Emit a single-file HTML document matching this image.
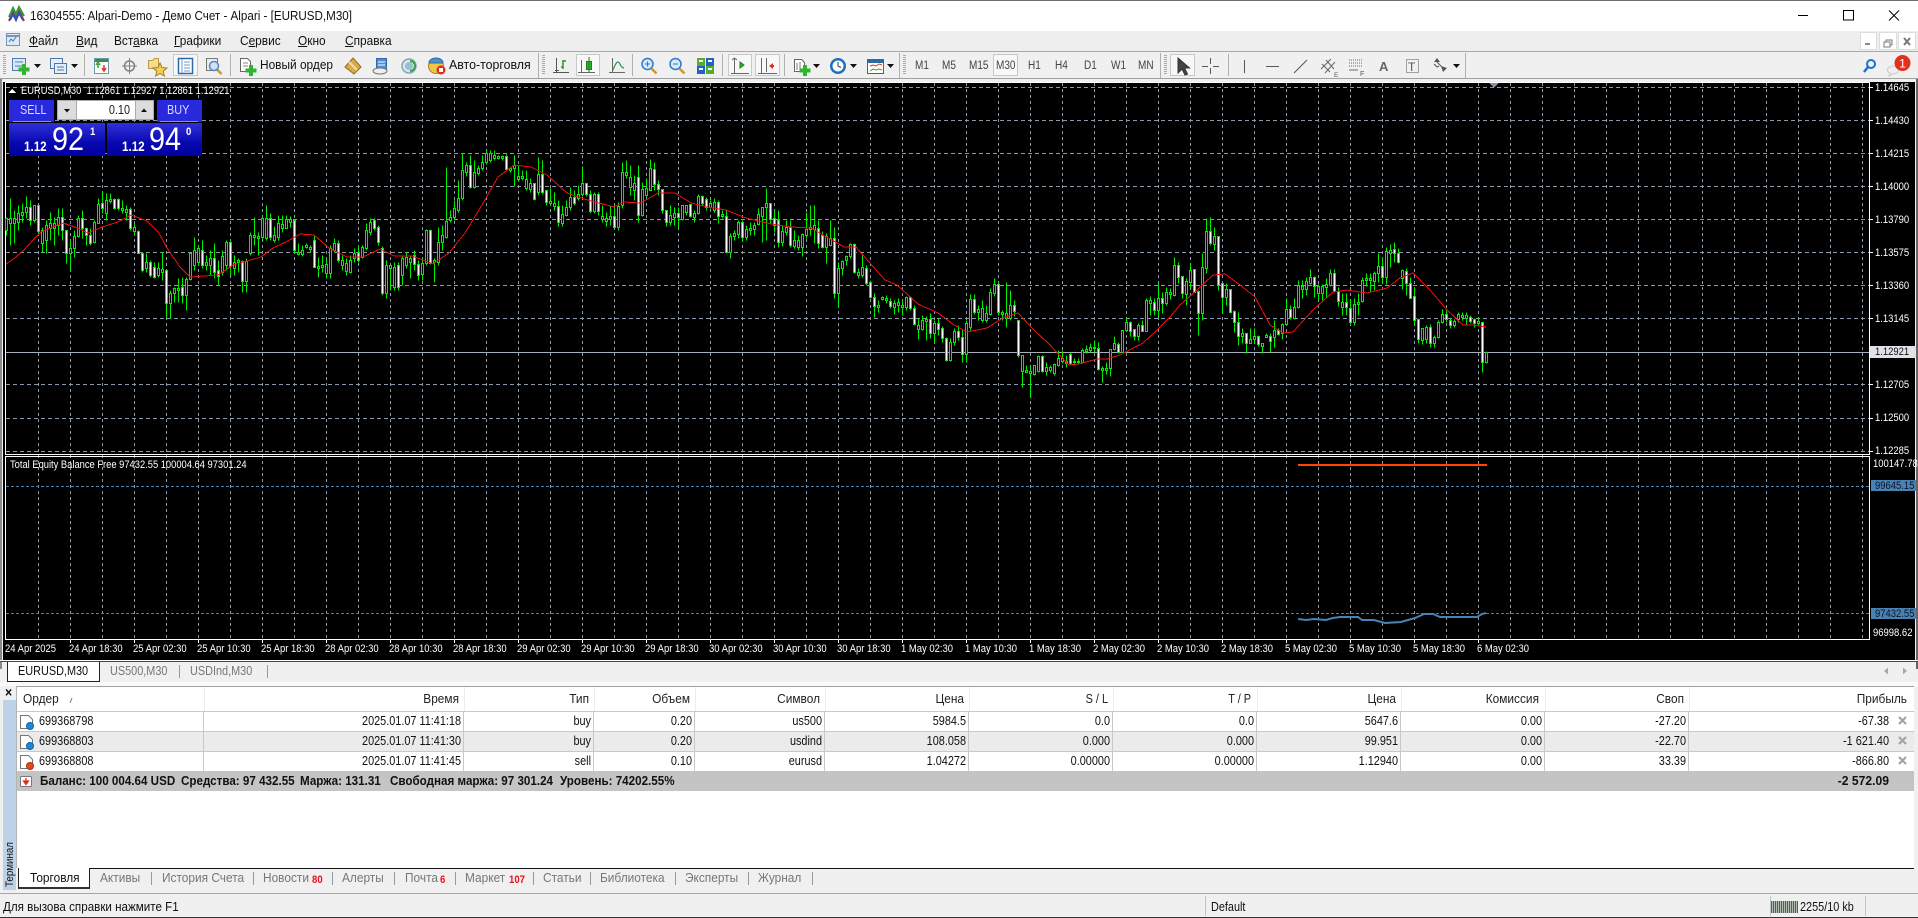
<!DOCTYPE html>
<html lang="ru"><head><meta charset="utf-8"><title>MT4</title>
<style>
html,body{margin:0;padding:0}
body{width:1918px;height:918px;overflow:hidden;position:relative;background:#f0f0f0;font-family:"Liberation Sans","Noto Sans CJK SC",sans-serif;color:#111}
div{box-sizing:border-box}
.a{position:absolute}
.t{position:absolute;white-space:nowrap;font-size:12.5px;line-height:14px;transform:scaleX(.87);transform-origin:0 0}
.r{margin-left:-300px;width:300px;text-align:right;transform-origin:100% 0}
.c,.hd .t{transform:scaleX(.95)}
.d{position:absolute;white-space:nowrap;font-size:11px;line-height:12px;color:#fff;transform:scaleX(.86);transform-origin:0 0}
.p{color:#444;font-size:11.5px;top:59px}
.g{color:#777}
.b{font-weight:bold}
.red{position:absolute;color:#e8141c;font-size:11px;font-weight:bold;line-height:12px;top:874px;transform:scaleX(.87);transform-origin:0 0}
.row{position:absolute;left:0;width:1918px;height:14px}
svg{position:absolute;left:0;top:0}
</style></head><body>
<!-- window frame -->
<div class="a" style="left:0;top:0;width:1918px;height:31px;background:#fff;border-top:1px solid #6e6e6e"></div>
<div class="a" style="left:0;top:31px;width:1918px;height:20px;background:#eee"></div>
<div class="a" style="left:0;top:51px;width:1918px;height:28px;background:#f0f0f0;border-top:1px solid #a8a8a8;border-bottom:1px solid #a0a0a0"></div>
<div class="a" style="left:3px;top:82px;width:1912px;height:579px;background:#000"></div>
<div class="a" style="left:0;top:79px;width:2px;height:590px;background:#8a8a8a"></div>
<div class="a" style="left:1916px;top:79px;width:2px;height:590px;background:#666"></div>

<div class="t" style="left:30px;top:9px;transform:scaleX(.93)">16304555: Alpari-Demo - Демо Счет - Alpari - [EURUSD,M30]</div>
<div class="t c" style="left:29px;top:34px"><u>Ф</u>айл</div>
<div class="t c" style="left:76px;top:34px"><u>В</u>ид</div>
<div class="t c" style="left:114px;top:34px">Вст<u>а</u>вка</div>
<div class="t c" style="left:174px;top:34px"><u>Г</u>рафики</div>
<div class="t c" style="left:240px;top:34px">С<u>е</u>рвис</div>
<div class="t c" style="left:298px;top:34px"><u>О</u>кно</div>
<div class="t c" style="left:345px;top:34px"><u>С</u>правка</div>
<div class="a" style="left:1860px;top:32px;width:17px;height:18px;background:#fff;border:1px solid #ddd"></div>
<div class="a" style="left:1879px;top:32px;width:18px;height:18px;background:#fff;border:1px solid #ddd"></div>
<div class="a" style="left:1898px;top:32px;width:18px;height:18px;background:#fff;border:1px solid #ddd"></div>

<div class="a" style="left:173px;top:54px;width:25px;height:22px;background:#f8f8f8;border:1px solid #c8c8c8"></div>
<div class="a" style="left:576px;top:54px;width:24px;height:22px;background:#f8f8f8;border:1px solid #c8c8c8"></div>
<div class="a" style="left:728px;top:54px;width:24px;height:22px;background:#f8f8f8;border:1px solid #c8c8c8"></div>
<div class="a" style="left:755px;top:54px;width:25px;height:22px;background:#f8f8f8;border:1px solid #c8c8c8"></div>
<div class="a" style="left:993px;top:54px;width:25px;height:22px;background:#f8f8f8;border:1px solid #c8c8c8"></div>
<div class="a" style="left:1170px;top:54px;width:25px;height:22px;background:#f8f8f8;border:1px solid #c8c8c8"></div>

<div class="t" style="left:260px;top:58px;transform:scaleX(.95)">Новый ордер</div>
<div class="t" style="left:449px;top:58px;transform:scaleX(.99)">Авто-торговля</div>
<div class="t p" style="left:915px">M1</div><div class="t p" style="left:942px">M5</div><div class="t p" style="left:969px">M15</div><div class="t p" style="left:996px">M30</div><div class="t p" style="left:1028px">H1</div><div class="t p" style="left:1055px">H4</div><div class="t p" style="left:1084px">D1</div><div class="t p" style="left:1111px">W1</div><div class="t p" style="left:1138px">MN</div>

<!-- chrome icons -->
<svg width="1918" height="82" viewBox="0 0 1918 82" fill="none">
<path d="M9 21L13 11L16 17L19 9L22 17L24 21" stroke="#c8312a" stroke-width="2"/><path d="M9 17L13 8L16 14L19 7L24 16" stroke="#2d9a3c" stroke-width="2"/><path d="M10 20L13 14L16 20L19 13L23 20" stroke="#2a4fc0" stroke-width="2"/>
<rect x="6.500" y="33.500" width="13" height="12" fill="#dfe9f3" stroke="#6f96bf"/><path d="M9 42l2-3 2 2 3-4" stroke="#4a78a8"/><path d="M6 36h14" stroke="#6f96bf" stroke-width="2"/>
<path d="M1798 15.500h10" stroke="#000"/><rect x="1843.500" y="10.500" width="10" height="9.500" stroke="#000"/><path d="M1889 10.500l10 10M1899 10.500l-10 10" stroke="#000"/>
<path d="M1865 44h5" stroke="#888" stroke-width="2"/><rect x="1886" y="40" width="6" height="5" stroke="#777"/><rect x="1884" y="42" width="6" height="5" fill="#fff" stroke="#777"/><path d="M1904 38l6 7M1910 38l-6 7" stroke="#777" stroke-width="2"/>
<!-- separators and grips -->
<path d="M84.500 54v22M230.500 54v22M538.500 53v25M632.500 54v22M722.500 54v22M784.500 54v22M899.500 53v25M1160.500 53v25M1228.500 54v22M1465.500 53v25" stroke="#b0b0b0"/>
<path d="M4.500 55v20M543.500 55v20M904.500 55v20M1165.500 55v20" stroke="#aaa" stroke-width="3" stroke-dasharray="1 1"/>
<path d="M34 64h7l-3.500 4zM71 64h7l-3.500 4zM813 64h7l-3.500 4zM850 64h7l-3.500 4zM887 64h7l-3.500 4zM1453 64h7l-3.500 4z" fill="#111"/>
<!-- new chart -->
<rect x="12.500" y="58.500" width="13" height="12" fill="#dde8f4" stroke="#4b7cb2"/><path d="M15 62h8M15 66h8" stroke="#4b7cb2"/><path d="M24 64v11M18.500 69.500h11" stroke="#2fb52f" stroke-width="4"/>
<!-- profiles -->
<rect x="50.500" y="58.500" width="12" height="10" fill="#e6eef7" stroke="#5078a8"/><rect x="54.500" y="63.500" width="12" height="10" fill="#e6eef7" stroke="#5078a8"/><path d="M57 67h7M57 70h7" stroke="#5078a8"/>
<!-- market watch -->
<rect x="94.500" y="58.500" width="14" height="15" fill="#fff" stroke="#6a9aa8"/><path d="M95 60.500h13" stroke="#3f8a4a" stroke-width="3"/><path d="M98 68v-4M96 65l2-3 2 3" stroke="#2fa52f" stroke-width="1.500"/><path d="M104 65v5M102 68l2 3 2-3" stroke="#d83a20" stroke-width="1.500"/>
<!-- crosshair -->
<circle cx="129.500" cy="66" r="5" stroke="#808080" stroke-width="1.500"/><path d="M129.500 58v16M122 66h15" stroke="#808080"/>
<!-- navigator -->
<path d="M148.500 60.500h4l2-2h4v10h-10z" fill="#f6dc8e" stroke="#b89a40"/><path d="M160 63l2 4.500 5 .5-3.800 3.200 1.200 4.800-4.400-2.600-4.400 2.600 1.200-4.800L153 68l5-.5z" fill="#f5cf52" stroke="#a08028"/>
<!-- terminal -->
<rect x="178.500" y="58.500" width="14" height="15" fill="#fff" stroke="#2a6aa8" stroke-width="1.500"/><path d="M182 59v14M184 62h6M184 65h6M184 68h6M184 71h6" stroke="#6f9ac8"/>
<!-- tester -->
<rect x="206.500" y="58.500" width="11" height="12" fill="#e6ecf2" stroke="#777"/><circle cx="214" cy="66" r="4.500" fill="#cfe3f5" stroke="#5a8ab8" stroke-width="1.500"/><path d="M217.500 70l4 4" stroke="#c89a30" stroke-width="2.500"/>
<!-- new order -->
<path d="M240.500 58.500h7l3 3v10h-10z" fill="#fff" stroke="#666"/><path d="M243 63h5M243 66h5" stroke="#888"/><path d="M251 65v11M245.500 70.500h11" stroke="#2fb52f" stroke-width="4"/>
<!-- metaeditor -->
<path d="M345 67l8-9 8 9-7 7z" fill="#dba94c" stroke="#8a6a20"/><path d="M349 62l8 8" stroke="#f5dca0" stroke-width="2"/>
<!-- mailbox -->
<rect x="376.500" y="58.500" width="10" height="11" fill="#4a90d9" stroke="#2f6aa8"/><path d="M378 62h7M378 65h7" stroke="#fff"/><ellipse cx="380" cy="71" rx="7" ry="3" fill="#eee" stroke="#777"/>
<!-- signals -->
<circle cx="409" cy="66" r="7" fill="#dbe7ee" stroke="#8aa4b4" stroke-width="1.500"/><circle cx="409" cy="66" r="4" fill="#9ac0d0"/><path d="M410 61a5 5 0 0 1 0 10" stroke="#3aa54a" stroke-width="2"/>
<!-- autotrade -->
<circle cx="436" cy="66" r="7.500" fill="#f0c648" stroke="#a88020"/><path d="M429 63a7 5 0 0 1 14 0z" fill="#4d93c8" stroke="#2f6aa8"/><circle cx="441" cy="70" r="4.500" fill="#d8321e"/><rect x="439" y="68" width="4" height="4" fill="#fff"/>
<!-- bars / candle / line -->
<path d="M556.500 58v14M553 72.500h16M555 70.500h4" stroke="#555"/><path d="M563 60v9M563 61h3M561 67h2" stroke="#2a9a2a" stroke-width="1.500"/>
<path d="M581.500 60v13M578 72.500h17" stroke="#666"/><rect x="586.500" y="61.500" width="5" height="8" fill="#2fb52f" stroke="#1a801a"/><path d="M589 57v15" stroke="#1a801a"/>
<path d="M612.500 58v15M609 72.500h16" stroke="#666"/><path d="M613 70c3-8 5-10 7-6 1 3 3 4 4 4" stroke="#2a9a4a" stroke-width="1.200"/>
<!-- zoom -->
<circle cx="647.500" cy="64" r="5.500" fill="#d6e8fa" stroke="#2a7ad0" stroke-width="1.500"/><path d="M645 64h5M647.500 61.500v5" stroke="#2a7ad0"/><path d="M651.500 68.500l5 5" stroke="#c89a30" stroke-width="2.500"/>
<circle cx="675.500" cy="64" r="5.500" fill="#d6e8fa" stroke="#2a7ad0" stroke-width="1.500"/><path d="M673 64h5" stroke="#2a7ad0"/><path d="M679.500 68.500l5 5" stroke="#c89a30" stroke-width="2.500"/>
<rect x="697" y="58" width="8" height="8" fill="#55ad2e"/><rect x="706" y="58" width="8" height="8" fill="#2262c4"/><rect x="697" y="66" width="8" height="8" fill="#2262c4"/><rect x="706" y="66" width="8" height="8" fill="#55ad2e"/><path d="M699 61h4M708 61h4M699 69h4M708 69h4" stroke="#fff" stroke-width="2"/>
<!-- autoscroll / shift -->
<path d="M734.500 58v15M731 73.500h18M732 60l2.500-2 2.500 2" stroke="#666"/><path d="M740 62v6l4-3z" fill="#2fb52f" stroke="#1a801a"/>
<path d="M761.500 58v15M758 73.500h19M766.500 58v14" stroke="#666"/><path d="M769 66l4-3v2h1v2h-1v2z" fill="#d8321e"/>
<!-- indicators -->
<path d="M794.500 59.500h7l3 3v9h-10z" fill="#fff" stroke="#666"/><path d="M797 63v7M800 62v9" stroke="#777"/><path d="M805 65v11M799.500 70.500h11" stroke="#2fb52f" stroke-width="4"/>
<!-- clock -->
<circle cx="838" cy="66" r="8" fill="#1a6fc4"/><circle cx="838" cy="66" r="5.500" fill="#fff"/><path d="M838 62v4l3 1.500" stroke="#335" stroke-width="1"/>
<!-- templates -->
<rect x="867.500" y="59.500" width="16" height="14" fill="#fff" stroke="#2a6aa8"/><path d="M868 61.500h15" stroke="#2a6aa8" stroke-width="3"/><path d="M870 66l3-1 3 1 3-2 3 1" stroke="#d83a20"/><path d="M870 71l3-2 3 1 3-1 3 1" stroke="#2fa52f"/>
<!-- cursor -->
<path d="M1178 58v15l4-4 3 6 2.500-1-3-6h5z" fill="#444" stroke="#333"/>
<path d="M1210.500 58v6M1210.500 68v6M1202 66.500h6M1213 66.500h6" stroke="#555"/>
<path d="M1244.500 60v13M1266 66.500h13M1294 73l13-13" stroke="#555"/>
<path d="M1321 69l10-10M1325 73l10-11M1326 60l8 9M1322 64l8 8" stroke="#666"/>
<path d="M1349 60h14M1349 63h14M1349 66h14" stroke="#666" stroke-dasharray="1 1"/><path d="M1349 70h9" stroke="#666"/>
<rect x="1406.500" y="59.500" width="12" height="13" stroke="#555" stroke-dasharray="1 1"/>
<path d="M1437 58l3 4h-6zM1441 66l6 2-4 4z" fill="#555"/><path d="M1437 62l5 5" stroke="#555"/><path d="M1434 64l3 3 2-1" stroke="#555"/>
<!-- search and chat -->
<circle cx="1871" cy="64" r="4" stroke="#1f6fd0" stroke-width="2"/><path d="M1868 67l-4 5" stroke="#1f6fd0" stroke-width="2.500"/>
<ellipse cx="1893" cy="70" rx="5.500" ry="4" fill="#eee" stroke="#ccc"/><path d="M1890 73l-1 3 4-2" fill="#eee" stroke="#ccc"/>
<circle cx="1902.500" cy="63" r="8" fill="#e3301e"/>
<text x="1902.500" y="67.500" font-family="Liberation Sans" font-size="12" fill="#fff" text-anchor="middle">1</text>
<text x="1321" y="77" font-family="Liberation Sans" font-size="6.500" fill="#555" transform="translate(13,0)">E</text>
<text x="1360" y="76" font-family="Liberation Sans" font-size="7" fill="#555">F</text>
<text x="1379" y="71" font-family="Liberation Sans" font-size="13" font-weight="bold" fill="#666">A</text>
<text x="1408" y="71" font-family="Liberation Sans" font-size="12" fill="#555">T</text>
</svg>

<!-- chart -->
<svg width="1918" height="918" viewBox="0 0 1918 918" fill="none" shape-rendering="crispEdges" style="z-index:1">
<path stroke="#8a9aaa" stroke-dasharray="3 3" d="M38.500 83V639M70.500 83V639M102.500 83V639M134.500 83V639M166.500 83V639M198.500 83V639M230.500 83V639M262.500 83V639M294.500 83V639M326.500 83V639M358.500 83V639M390.500 83V639M422.500 83V639M454.500 83V639M486.500 83V639M518.500 83V639M550.500 83V639M582.500 83V639M614.500 83V639M646.500 83V639M678.500 83V639M710.500 83V639M742.500 83V639M774.500 83V639M806.500 83V639M838.500 83V639M870.500 83V639M902.500 83V639M934.500 83V639M966.500 83V639M998.500 83V639M1030.500 83V639M1062.500 83V639M1094.500 83V639M1126.500 83V639M1158.500 83V639M1190.500 83V639M1222.500 83V639M1254.500 83V639M1286.500 83V639M1318.500 83V639M1350.500 83V639M1382.500 83V639M1414.500 83V639M1446.500 83V639M1478.500 83V639M1510.500 83V639M1542.500 83V639M1574.500 83V639M1606.500 83V639M1638.500 83V639M1670.500 83V639M1702.500 83V639M1734.500 83V639M1766.500 83V639M1798.500 83V639M1830.500 83V639M1862.500 83V639"/>
<path d="M6 87.500H1869M6 120.500H1869M6 153.500H1869M6 186.500H1869M6 219.500H1869M6 252.500H1869M6 285.500H1869M6 318.500H1869M6 384.500H1869M6 418.500H1869M6 451.500H1869" stroke="#8a9aaa" stroke-dasharray="4 3"/>
<path d="M6 352.500H1869" stroke="#a6b0bc"/>
<path d="M6 486.500H1869M6 613.500H1869" stroke="#4682b4" stroke-dasharray="3 2"/>
<path d="M5.500 82.500H1869.500V454M5.500 82V454M5 454.500H1870M5 456.500H1870M5.500 456V639.500H1870M1869.500 456V640" stroke="#fff"/>
<path d="M1870 87.500h3M1870 120.500h3M1870 153.500h3M1870 186.500h3M1870 219.500h3M1870 252.500h3M1870 285.500h3M1870 318.500h3M1870 384.500h3M1870 418.500h3M1870 451.500h3M70.500 640v3M134.500 640v3M198.500 640v3M262.500 640v3M326.500 640v3M390.500 640v3M454.500 640v3M518.500 640v3M582.500 640v3M646.500 640v3M710.500 640v3M774.500 640v3M838.500 640v3M902.500 640v3M966.500 640v3M1030.500 640v3M1094.500 640v3M1158.500 640v3M1222.500 640v3M1286.500 640v3M1350.500 640v3M1414.500 640v3M1478.500 640v3" stroke="#fff"/>
<g transform="translate(.5,.5)">
<path stroke="#0e0" d="M6 217V235M10 198V245M14 210V243M18 205V230M22 203V222M26 196V218M30 200V225M34 205V222M38 205V235M42 227V252M46 220V253M50 212V240M54 217V245M58 208V235M62 208V240M66 230V263M70 240V270M74 230V257M78 215V237M82 210V238M86 227V245M90 228V245M94 220V243M98 198V223M102 191V213M106 193V220M110 193V203M114 198V209M118 198V210M122 200V213M126 205V220M130 207V230M134 223V235M138 230V253M142 252V272M146 253V272M150 260V277M154 262V278M158 262V277M162 252V280M166 270V317M170 290V318M174 287V302M178 278V302M182 277V303M186 277V310M190 252V280M194 237V270M198 245V265M202 240V268M206 255V270M210 250V275M214 243V278M218 260V285M222 250V275M226 240V270M230 240V275M234 255V275M238 258V272M242 260V292M246 258V292M250 232V255M254 217V245M258 232V255M262 218V240M266 205V240M270 213V240M274 226V242M278 215V240M282 215V232M286 215V228M290 216V227M294 220V253M298 243V255M302 245V256M306 243V248M310 245V252M314 235V267M318 257V277M322 255V272M326 258V278M330 245V278M334 238V252M338 240V262M342 255V270M346 258V275M350 255V273M354 248V262M358 245V262M362 245V258M366 223V250M370 218V235M374 218V230M378 225V245M382 246V295M386 260V298M390 265V290M394 262V290M398 262V290M402 255V285M406 252V268M410 255V278M414 250V270M418 260V280M422 258V280M426 229V265M430 229V264M434 258V282M438 227V265M442 225V250M446 167V238M450 210V222M454 200V220M458 180V212M462 153V200M466 162V176M470 155V188M474 160V188M478 165V175M482 155V170M486 150V164M490 150V162M494 150V160M498 155V159M502 155V160M506 154V170M510 167V172M514 155V186M518 165V181M522 170V180M526 170V190M530 178V192M534 183V200M538 157V195M542 160V194M546 190V205M550 188V205M554 192V210M558 200V226M562 205V226M566 200V216M570 187V210M574 190V205M578 185V200M582 166V196M586 183V196M590 190V213M594 192V213M598 192V215M602 205V222M606 212V226M610 205V225M614 205V228M618 202V230M622 162V208M626 160V178M630 165V195M634 175V200M638 165V222M642 182V216M646 178V197M650 159V190M654 162V190M658 180V195M662 189V213M666 210V226M670 205V225M674 207V225M678 207V228M682 205V220M686 205V215M690 204V217M694 210V222M698 194V214M702 195V205M706 197V210M710 200V208M714 198V212M718 200V223M722 210V218M726 210V253M730 233V258M734 230V240M738 220V238M742 220V241M746 225V240M750 222V235M754 222V235M758 208V225M762 207V242M766 188V240M770 203V223M774 210V232M778 210V247M782 225V246M786 220V235M790 220V247M794 230V248M798 235V250M802 233V256M806 212V238M810 205V235M814 205V243M818 220V248M822 231V248M826 233V263M830 220V246M834 227V298M838 262V307M842 260V275M846 255V265M850 243V258M854 243V273M858 268V278M862 253V277M866 265V285M870 280V298M874 293V317M878 300V312M882 296V300M886 295V303M890 298V308M894 300V314M898 298V312M902 300V315M906 296V310M910 296V310M914 305V325M918 318V339M922 315V330M926 316V340M930 313V338M934 320V343M938 318V335M942 326V342M946 337V361M950 338V361M954 328V345M958 325V340M962 330V362M966 320V362M970 294V330M974 294V314M978 305V320M982 300V322M986 305V322M990 288V315M994 278V296M998 282V315M1002 310V320M1006 282V327M1010 290V320M1014 300V316M1018 320V357M1022 355V387M1026 365V372M1030 365V397M1034 365V375M1038 355V372M1042 355V372M1046 362V375M1050 365V372M1054 363V375M1058 350V366M1062 350V363M1066 355V367M1070 352V364M1074 358V364M1078 358V364M1082 348V362M1086 345V353M1090 343V352M1094 340V352M1098 342V370M1102 366V382M1106 362V374M1110 349V376M1114 336V350M1118 342V353M1122 330V352M1126 317V331M1130 321V336M1134 329V340M1138 323V340M1142 320V331M1146 298V331M1150 296V315M1154 298V315M1158 283V317M1162 292V313M1166 287V305M1170 288V299M1174 257V296M1178 262V283M1182 276V298M1186 278V305M1190 263V288M1194 269V292M1198 290V335M1202 253V320M1206 218V273M1210 217V245M1214 227V250M1218 236V290M1222 283V313M1226 283V305M1230 289V313M1234 310V332M1238 312V345M1242 328V343M1246 333V353M1250 328V343M1254 328V343M1258 335V346M1262 343V353M1266 333V337M1270 333V352M1274 320V347M1278 328V335M1282 323V339M1286 298V324M1290 305V319M1294 298V319M1298 280V308M1302 280V298M1306 277V295M1310 269V284M1314 276V297M1318 284V300M1322 284V300M1326 278V298M1330 269V286M1334 269V292M1338 287V306M1342 293V315M1346 293V315M1350 299V323M1354 298V325M1358 293V315M1362 277V302M1366 273V286M1370 273V291M1374 271V290M1378 253V282M1382 257V283M1386 247V284M1390 244V267M1394 242V262M1398 248V263M1402 269V289M1406 268V295M1410 277V298M1414 287V325M1418 318V343M1422 328V344M1426 325V343M1430 324V347M1434 335V347M1438 320V338M1442 309V323M1446 310V322M1450 318V328M1454 319V327M1458 312V322M1462 312V320M1466 312V325M1470 315V323M1474 318V327M1478 317V326M1482 322V372M1486 351V363"/>
<path stroke="#0e0" fill="#000" d="M5 218h2v12h-2zM9 218h2v5h-2zM13 218h2v5h-2zM17 213h2v9h-2zM21 212h2v3h-2zM25 207h2v5h-2zM33 205h2v15h-2zM41 230h2v13h-2zM45 225h2v15h-2zM49 223h2v5h-2zM53 223h2v5h-2zM57 217h2v8h-2zM69 248h2v5h-2zM73 236h2v12h-2zM77 218h2v18h-2zM93 222h2v20h-2zM97 204h2v19h-2zM105 200h2v13h-2zM109 199h2v2h-2zM121 208h2v2h-2zM125 209h2v3h-2zM133 227h2v4h-2zM145 262h2v6h-2zM157 268h2v7h-2zM161 269h2v3h-2zM169 293h2v10h-2zM173 288h2v5h-2zM177 288h2v2h-2zM185 279h2v16h-2zM189 253h2v26h-2zM193 250h2v15h-2zM197 248h2v14h-2zM205 262h2v3h-2zM209 258h2v7h-2zM221 256h2v16h-2zM225 242h2v23h-2zM233 262h2v6h-2zM237 260h2v2h-2zM245 261h2v20h-2zM249 235h2v18h-2zM253 235h2v2h-2zM257 236h2v2h-2zM261 218h2v19h-2zM265 218h2v20h-2zM273 235h2v5h-2zM277 223h2v14h-2zM281 224h2v4h-2zM285 219h2v9h-2zM289 219h2v3h-2zM297 252h2v2h-2zM301 250h2v4h-2zM305 245h2v2h-2zM309 247h2v2h-2zM317 266h2v2h-2zM321 265h2v2h-2zM325 264h2v9h-2zM329 248h2v25h-2zM333 243h2v7h-2zM341 260h2v5h-2zM345 263h2v8h-2zM349 260h2v12h-2zM353 253h2v5h-2zM361 247h2v10h-2zM365 230h2v18h-2zM369 222h2v10h-2zM385 265h2v28h-2zM389 265h2v3h-2zM393 267h2v20h-2zM401 258h2v17h-2zM405 257h2v8h-2zM409 258h2v4h-2zM421 263h2v11h-2zM425 230h2v33h-2zM433 260h2v2h-2zM437 242h2v20h-2zM441 235h2v7h-2zM445 221h2v16h-2zM449 217h2v3h-2zM453 208h2v9h-2zM457 198h2v12h-2zM461 170h2v28h-2zM465 165h2v7h-2zM473 172h2v15h-2zM477 168h2v5h-2zM481 162h2v6h-2zM485 153h2v9h-2zM489 153h2v7h-2zM493 155h2v3h-2zM497 156h2v2h-2zM501 156h2v2h-2zM509 168h2v2h-2zM513 165h2v3h-2zM517 176h2v3h-2zM521 176h2v2h-2zM525 179h2v9h-2zM529 183h2v6h-2zM537 174h2v18h-2zM549 201h2v2h-2zM553 203h2v3h-2zM561 214h2v9h-2zM565 207h2v8h-2zM569 197h2v10h-2zM577 194h2v4h-2zM581 183h2v11h-2zM593 194h2v17h-2zM601 216h2v3h-2zM605 218h2v3h-2zM609 216h2v3h-2zM617 206h2v21h-2zM621 172h2v33h-2zM625 172h2v3h-2zM629 177h2v10h-2zM633 183h2v7h-2zM641 189h2v26h-2zM645 188h2v7h-2zM649 168h2v22h-2zM669 215h2v7h-2zM673 213h2v4h-2zM681 205h2v14h-2zM685 205h2v7h-2zM693 213h2v4h-2zM697 196h2v17h-2zM709 203h2v4h-2zM713 202h2v8h-2zM721 214h2v2h-2zM729 236h2v16h-2zM733 233h2v3h-2zM737 222h2v12h-2zM745 229h2v8h-2zM749 228h2v2h-2zM753 225h2v4h-2zM757 214h2v10h-2zM761 207h2v9h-2zM765 203h2v4h-2zM781 231h2v11h-2zM785 227h2v5h-2zM793 240h2v6h-2zM797 240h2v7h-2zM801 234h2v13h-2zM805 229h2v6h-2zM809 227h2v2h-2zM813 225h2v4h-2zM825 236h2v11h-2zM829 238h2v7h-2zM837 268h2v25h-2zM841 261h2v7h-2zM845 256h2v4h-2zM849 244h2v12h-2zM857 272h2v3h-2zM861 267h2v8h-2zM877 305h2v2h-2zM881 297h2v2h-2zM885 298h2v2h-2zM893 303h2v4h-2zM897 302h2v3h-2zM901 305h2v2h-2zM905 297h2v10h-2zM917 325h2v4h-2zM921 320h2v9h-2zM925 319h2v2h-2zM933 323h2v10h-2zM949 342h2v18h-2zM953 331h2v11h-2zM965 323h2v31h-2zM969 299h2v28h-2zM977 309h2v3h-2zM981 308h2v12h-2zM985 313h2v7h-2zM989 292h2v22h-2zM993 284h2v9h-2zM1001 312h2v2h-2zM1005 313h2v5h-2zM1009 305h2v13h-2zM1021 355h2v16h-2zM1025 370h2v2h-2zM1029 371h2v2h-2zM1033 365h2v9h-2zM1037 356h2v15h-2zM1045 367h2v4h-2zM1049 367h2v3h-2zM1053 364h2v9h-2zM1057 358h2v7h-2zM1061 358h2v3h-2zM1065 361h2v2h-2zM1073 361h2v1h-2zM1077 361h2v1h-2zM1081 350h2v12h-2zM1085 349h2v2h-2zM1089 347h2v3h-2zM1101 368h2v2h-2zM1105 368h2v2h-2zM1109 349h2v19h-2zM1113 343h2v6h-2zM1121 330h2v22h-2zM1125 322h2v8h-2zM1137 325h2v11h-2zM1145 300h2v31h-2zM1149 300h2v3h-2zM1157 298h2v12h-2zM1165 292h2v11h-2zM1169 292h2v2h-2zM1173 265h2v30h-2zM1185 281h2v13h-2zM1189 270h2v12h-2zM1201 267h2v46h-2zM1205 231h2v37h-2zM1213 236h2v8h-2zM1225 289h2v8h-2zM1241 333h2v3h-2zM1249 339h2v4h-2zM1253 336h2v3h-2zM1261 343h2v3h-2zM1265 335h2v2h-2zM1273 330h2v7h-2zM1281 324h2v9h-2zM1285 309h2v15h-2zM1293 307h2v11h-2zM1297 285h2v22h-2zM1301 286h2v3h-2zM1305 281h2v8h-2zM1309 277h2v6h-2zM1317 286h2v7h-2zM1321 286h2v7h-2zM1325 284h2v3h-2zM1329 273h2v12h-2zM1341 302h2v5h-2zM1353 304h2v18h-2zM1357 302h2v2h-2zM1361 280h2v21h-2zM1365 278h2v2h-2zM1369 278h2v2h-2zM1373 273h2v8h-2zM1377 266h2v7h-2zM1385 251h2v26h-2zM1389 250h2v3h-2zM1401 270h2v8h-2zM1421 328h2v12h-2zM1425 327h2v12h-2zM1433 337h2v6h-2zM1437 322h2v15h-2zM1441 314h2v8h-2zM1453 321h2v4h-2zM1457 314h2v5h-2zM1461 315h2v2h-2zM1465 315h2v3h-2zM1477 321h2v2h-2zM1485 352h2v10h-2z"/>
<path stroke="#0e0" fill="#fff" d="M29 207h2v13h-2zM37 205h2v26h-2zM61 217h2v13h-2zM65 230h2v23h-2zM81 218h2v10h-2zM85 228h2v7h-2zM89 235h2v8h-2zM101 203h2v5h-2zM113 199h2v9h-2zM117 199h2v9h-2zM129 209h2v19h-2zM137 231h2v22h-2zM141 253h2v17h-2zM149 262h2v13h-2zM153 267h2v10h-2zM165 270h2v33h-2zM181 287h2v8h-2zM201 250h2v15h-2zM213 258h2v14h-2zM217 270h2v6h-2zM229 242h2v24h-2zM241 261h2v20h-2zM269 218h2v19h-2zM293 220h2v30h-2zM313 240h2v27h-2zM337 243h2v17h-2zM357 252h2v8h-2zM373 220h2v8h-2zM377 227h2v15h-2zM381 248h2v45h-2zM397 265h2v22h-2zM413 255h2v9h-2zM417 264h2v11h-2zM429 230h2v33h-2zM469 165h2v22h-2zM505 156h2v13h-2zM533 183h2v16h-2zM541 174h2v18h-2zM545 190h2v12h-2zM557 206h2v16h-2zM573 197h2v6h-2zM585 183h2v11h-2zM589 194h2v17h-2zM597 194h2v17h-2zM613 216h2v11h-2zM637 177h2v38h-2zM653 169h2v15h-2zM657 184h2v5h-2zM661 189h2v21h-2zM665 210h2v12h-2zM677 213h2v4h-2zM689 204h2v12h-2zM701 196h2v7h-2zM705 199h2v8h-2zM717 202h2v14h-2zM725 216h2v36h-2zM741 222h2v15h-2zM769 203h2v16h-2zM773 218h2v7h-2zM777 220h2v22h-2zM789 227h2v18h-2zM817 228h2v15h-2zM821 235h2v12h-2zM833 238h2v55h-2zM853 244h2v28h-2zM865 268h2v15h-2zM869 282h2v15h-2zM873 297h2v9h-2zM889 301h2v5h-2zM909 297h2v11h-2zM913 308h2v16h-2zM929 319h2v14h-2zM937 323h2v6h-2zM941 328h2v10h-2zM945 338h2v22h-2zM957 331h2v6h-2zM961 337h2v17h-2zM973 299h2v13h-2zM997 284h2v28h-2zM1013 305h2v6h-2zM1017 320h2v35h-2zM1041 356h2v15h-2zM1069 354h2v9h-2zM1093 347h2v1h-2zM1097 348h2v21h-2zM1117 344h2v8h-2zM1129 322h2v9h-2zM1133 329h2v7h-2zM1141 325h2v6h-2zM1153 302h2v8h-2zM1161 298h2v5h-2zM1177 265h2v12h-2zM1181 276h2v17h-2zM1193 269h2v23h-2zM1197 291h2v22h-2zM1209 231h2v12h-2zM1217 236h2v49h-2zM1221 283h2v14h-2zM1229 289h2v23h-2zM1233 311h2v11h-2zM1237 322h2v14h-2zM1245 333h2v10h-2zM1257 336h2v8h-2zM1269 336h2v5h-2zM1277 330h2v4h-2zM1289 309h2v8h-2zM1313 277h2v9h-2zM1333 273h2v18h-2zM1337 291h2v10h-2zM1345 302h2v5h-2zM1349 308h2v14h-2zM1381 266h2v11h-2zM1393 249h2v4h-2zM1397 253h2v9h-2zM1405 271h2v12h-2zM1409 283h2v15h-2zM1413 296h2v24h-2zM1417 319h2v20h-2zM1429 327h2v16h-2zM1445 314h2v5h-2zM1449 320h2v5h-2zM1469 317h2v4h-2zM1473 319h2v4h-2zM1481 322h2v40h-2z"/>
</g>
<polyline stroke="#f01010" points="6,264 16,257 24,250 33,240 41,232 53,227 63,223 75,227 88,233 102,227 118,222 131,215 147,221 159,233 167,248 180,267 190,277 218,275 233,265 261,257 273,248 286,242 300,234 314,235 329,248 347,257 363,257 380,249 394,256 412,256 433,264 449,253 465,233 482,205 498,177 514,165 531,167 547,175 567,193 584,199 614,207 624,202 640,203 648,199 658,193 675,193 691,203 707,207 726,210 746,218 771,224 791,227 811,228 832,240 844,247 856,247 869,262 885,280 897,285 918,304 938,313 954,325 967,332 987,328 1003,318 1018,313 1034,330 1048,343 1069,365 1079,364 1097,359 1107,359 1120,355 1143,343 1157,330 1170,317 1180,305 1197,290 1213,275 1225,274 1240,285 1255,297 1270,325 1283,333 1293,332 1313,310 1333,292 1347,290 1367,293 1387,288 1400,278 1413,273 1430,290 1447,310 1463,325 1473,325 1486,327"/>
<path d="M1298 465H1487" stroke="#ff4500" stroke-width="2"/>
<polyline stroke="#4682b4" stroke-width="2" shape-rendering="auto" points="1298,619 1306,620 1314,619 1326,620 1333,618 1340,617 1358,617 1362,620 1374,620 1385,623 1401,622 1415,618 1424,614 1433,614 1440,617 1477,617 1482,614 1486,613"/>
<path d="M1489 83h10l-5 4.500z" fill="#8494a4"/>
<path d="M8 93l4-4 4 4z" fill="#fff"/>
</svg>

<div style="position:absolute;left:0;top:0;width:1918px;height:918px;z-index:2">
<div class="d" style="left:21px;top:85px;transform:scaleX(.85)">EURUSD,M30&nbsp; 1.12861 1.12927 1.12861 1.12921</div>
<div class="d" style="left:10px;top:459px;transform:scaleX(.85)">Total Equity Balance Free 97432.55 100004.64 97301.24</div>
<!-- one click -->
<div class="a" style="left:9px;top:100px;width:45px;height:22px;background:#2828dc"></div>
<div class="a" style="left:13px;top:121px;width:38px;height:1px;background:#8c8cf0"></div>
<div class="a" style="left:157px;top:100px;width:45px;height:22px;background:#2828dc"></div>
<div class="a" style="left:160px;top:121px;width:38px;height:1px;background:#8c8cf0"></div>
<div class="t" style="left:20px;top:103px;color:#d8dcff">SELL</div>
<div class="t" style="left:167px;top:103px;color:#d8dcff">BUY</div>
<div class="a" style="left:57px;top:100px;width:97px;height:20px;background:#fff;border:1px solid #aaa"></div>
<div class="a" style="left:57px;top:100px;width:20px;height:20px;background:#dcdcdc;border:1px solid #aaa"></div>
<div class="a" style="left:135px;top:100px;width:19px;height:20px;background:#dcdcdc;border:1px solid #aaa"></div>
<div class="t r" style="left:130px;top:103px;color:#222">0.10</div>
<svg width="1918" height="200"><path d="M64 109h6l-3 3.500zM141 112h6l-3-3.500z" fill="#111"/></svg>
<div class="a" style="left:9px;top:123px;width:96px;height:33px;background:linear-gradient(#3030d8,#0808b0 60%,#0000a0)"></div>
<div class="a" style="left:107px;top:123px;width:95px;height:33px;background:linear-gradient(#3030d8,#0808b0 60%,#0000a0)"></div>
<div class="t b" style="left:24px;top:139px;color:#fff;font-size:14px;transform:scaleX(.83)">1.12</div>
<div class="t b" style="left:122px;top:139px;color:#fff;font-size:14px;transform:scaleX(.83)">1.12</div>
<div class="t" style="left:52px;top:123px;color:#fff;font-size:32px;line-height:32px;transform:scaleX(.9)">92</div>
<div class="t" style="left:149px;top:123px;color:#fff;font-size:32px;line-height:32px;transform:scaleX(.9)">94</div>
<div class="t b" style="left:90px;top:126px;color:#fff;font-size:11px;line-height:12px">1</div>
<div class="t b" style="left:186px;top:126px;color:#fff;font-size:11px;line-height:12px">0</div>
<!-- price axis -->
<div class="d" style="left:1875px;top:82px">1.14645</div><div class="d" style="left:1875px;top:115px">1.14430</div><div class="d" style="left:1875px;top:148px">1.14215</div><div class="d" style="left:1875px;top:181px">1.14000</div><div class="d" style="left:1875px;top:214px">1.13790</div><div class="d" style="left:1875px;top:247px">1.13575</div><div class="d" style="left:1875px;top:280px">1.13360</div><div class="d" style="left:1875px;top:313px">1.13145</div><div class="d" style="left:1875px;top:379px">1.12705</div><div class="d" style="left:1875px;top:412px">1.12500</div><div class="d" style="left:1875px;top:445px">1.12285</div>
<div class="a" style="left:1870px;top:346px;width:46px;height:12px;background:#dfe3e8"></div>
<div class="d" style="left:1875px;top:346px;color:#111">1.12921</div>
<div class="d" style="left:1873px;top:458px">100147.78</div>
<div class="a" style="left:1871px;top:480px;width:45px;height:11px;background:#4682b4"></div>
<div class="d" style="left:1875px;top:480px;color:#112">99645.15</div>
<div class="a" style="left:1871px;top:608px;width:45px;height:11px;background:#4682b4"></div>
<div class="d" style="left:1875px;top:608px;color:#112">97432.55</div>
<div class="d" style="left:1873px;top:627px">96998.62</div>
<!-- date axis -->
<div class="d" style="left:5px;top:643px">24 Apr 2025</div><div class="d" style="left:69px;top:643px">24 Apr 18:30</div><div class="d" style="left:133px;top:643px">25 Apr 02:30</div><div class="d" style="left:197px;top:643px">25 Apr 10:30</div><div class="d" style="left:261px;top:643px">25 Apr 18:30</div><div class="d" style="left:325px;top:643px">28 Apr 02:30</div><div class="d" style="left:389px;top:643px">28 Apr 10:30</div><div class="d" style="left:453px;top:643px">28 Apr 18:30</div><div class="d" style="left:517px;top:643px">29 Apr 02:30</div><div class="d" style="left:581px;top:643px">29 Apr 10:30</div><div class="d" style="left:645px;top:643px">29 Apr 18:30</div><div class="d" style="left:709px;top:643px">30 Apr 02:30</div><div class="d" style="left:773px;top:643px">30 Apr 10:30</div><div class="d" style="left:837px;top:643px">30 Apr 18:30</div><div class="d" style="left:901px;top:643px">1 May 02:30</div><div class="d" style="left:965px;top:643px">1 May 10:30</div><div class="d" style="left:1029px;top:643px">1 May 18:30</div><div class="d" style="left:1093px;top:643px">2 May 02:30</div><div class="d" style="left:1157px;top:643px">2 May 10:30</div><div class="d" style="left:1221px;top:643px">2 May 18:30</div><div class="d" style="left:1285px;top:643px">5 May 02:30</div><div class="d" style="left:1349px;top:643px">5 May 10:30</div><div class="d" style="left:1413px;top:643px">5 May 18:30</div><div class="d" style="left:1477px;top:643px">6 May 02:30</div>
</div>

<!-- chart tabs -->
<div class="a" style="left:0;top:660px;width:1918px;height:1px;background:#fff;z-index:3"></div>
<div class="a" style="left:0;top:661px;width:1918px;height:1px;background:#444;z-index:3"></div>
<div class="a" style="left:7px;top:662px;width:93px;height:20px;background:#fff;border:1px solid #222;border-top:0"></div>
<div class="t" style="left:18px;top:664px">EURUSD,M30</div>
<div class="t g" style="left:110px;top:664px">US500,M30</div>
<div class="t g" style="left:190px;top:664px">USDInd,M30</div>
<div class="a" style="left:179px;top:665px;width:1px;height:13px;background:#999"></div>
<div class="a" style="left:267px;top:665px;width:1px;height:13px;background:#999"></div>
<div class="a" style="left:0;top:682px;width:1918px;height:4px;background:#fafafa"></div>

<!-- terminal -->
<div class="a" style="left:16px;top:686px;width:1898px;height:182px;background:#fff;border-top:1px solid #a0a0a0;border-left:1px solid #b4b4b4"></div>
<div class="a" style="left:3px;top:700px;width:13px;height:190px;background:#bdd2e6"></div>
<div class="t b" style="left:5px;top:685px;font-size:14px">×</div>
<div class="a" style="left:17px;top:732px;width:1897px;height:19px;background:#ebebeb"></div>
<div class="a" style="left:17px;top:771px;width:1897px;height:20px;background:#c4c4c4"></div>
<svg width="1918" height="918" viewBox="0 0 1918 918" fill="none" shape-rendering="crispEdges">
<path d="M204.500 687v24M464.500 687v24M594.500 687v24M695.500 687v24M825.500 687v24M969.500 687v24M1113.500 687v24M1257.500 687v24M1401.500 687v24M1545.500 687v24M1689.500 687v24" stroke="#ececec"/>
<path d="M17 711.500H1914M17 731.500H1914M17 751.500H1914" stroke="#c8c8c8"/>
<path d="M203.500 712v59M463.500 712v59M593.500 712v59M694.500 712v59M824.500 712v59M968.500 712v59M1112.500 712v59M1256.500 712v59M1400.500 712v59M1544.500 712v59M1688.500 712v59" stroke="#c8c8c8"/>
<path d="M70 703l2-5" stroke="#777" shape-rendering="auto"/>
<path d="M18 868.500H1914M0 893.500H1918" stroke="#111"/>
<path d="M0 893.500H1918" stroke="#a6a6a6"/><path d="M0 917.500H1918" stroke="#333"/>
<path d="M1205.500 896v20M1770.500 896v20M1865.500 896v20" stroke="#c4c4c4"/>
<g shape-rendering="auto">
<path d="M1899 717l7 7M1906 717l-7 7M1899 737l7 7M1906 737l-7 7M1899 757l7 7M1906 757l-7 7" stroke="#a4a4a4" stroke-width="2.200"/>
<path d="M20.500 715.500h8l4 4v9h-12zM20.500 735.500h8l4 4v9h-12zM20.500 755.500h8l4 4v9h-12z" fill="#fff" stroke="#777"/>
<circle cx="30" cy="726" r="3.500" fill="#1e88d8" stroke="#14609c"/><circle cx="30" cy="746" r="3.500" fill="#1e88d8" stroke="#14609c"/><circle cx="30" cy="766" r="3.500" fill="#e0481e" stroke="#a8300c"/>
<rect x="20.500" y="776.500" width="11" height="10" rx="1" fill="#fff" stroke="#777"/><path d="M26 778v5M23.500 781l2.500 3.500 2.500-3.500z" stroke="#d8321e" fill="#d8321e" stroke-width="1.300"/>
<path d="M1884 671l4-3.500v7zM1907 671l-4-3.500v7z" fill="#a8a8a8"/>
<text transform="translate(13,887) rotate(-90)" font-family="Liberation Sans" font-size="11" fill="#111" textLength="45" lengthAdjust="spacingAndGlyphs">Терминал</text>
</g>
</svg>

<div class="t c" style="left:23px;top:692px;color:#222">Ордер</div>
<div class="row hd" style="top:692px;color:#222">
<div class="t r" style="left:459px">Время</div><div class="t r" style="left:589px">Тип</div><div class="t r" style="left:690px">Объем</div><div class="t r" style="left:820px">Символ</div><div class="t r" style="left:964px">Цена</div><div class="t r" style="left:1108px;transform:scaleX(.87)">S / L</div><div class="t r" style="left:1251px;transform:scaleX(.87)">T / P</div><div class="t r" style="left:1396px">Цена</div><div class="t r" style="left:1539px">Комиссия</div><div class="t r" style="left:1684px">Своп</div><div class="t r" style="left:1907px">Прибыль</div>
</div>
<div class="row" style="top:714px">
<div class="t" style="left:39px">699368798</div><div class="t r" style="left:461px">2025.01.07 11:41:18</div><div class="t r" style="left:591px">buy</div><div class="t r" style="left:692px">0.20</div><div class="t r" style="left:822px">us500</div><div class="t r" style="left:966px">5984.5</div><div class="t r" style="left:1110px">0.0</div><div class="t r" style="left:1254px">0.0</div><div class="t r" style="left:1398px">5647.6</div><div class="t r" style="left:1542px">0.00</div><div class="t r" style="left:1686px">-27.20</div><div class="t r" style="left:1889px">-67.38</div>
</div>
<div class="row" style="top:734px">
<div class="t" style="left:39px">699368803</div><div class="t r" style="left:461px">2025.01.07 11:41:30</div><div class="t r" style="left:591px">buy</div><div class="t r" style="left:692px">0.20</div><div class="t r" style="left:822px">usdind</div><div class="t r" style="left:966px">108.058</div><div class="t r" style="left:1110px">0.000</div><div class="t r" style="left:1254px">0.000</div><div class="t r" style="left:1398px">99.951</div><div class="t r" style="left:1542px">0.00</div><div class="t r" style="left:1686px">-22.70</div><div class="t r" style="left:1889px">-1 621.40</div>
</div>
<div class="row" style="top:754px">
<div class="t" style="left:39px">699368808</div><div class="t r" style="left:461px">2025.01.07 11:41:45</div><div class="t r" style="left:591px">sell</div><div class="t r" style="left:692px">0.10</div><div class="t r" style="left:822px">eurusd</div><div class="t r" style="left:966px">1.04272</div><div class="t r" style="left:1110px">0.00000</div><div class="t r" style="left:1254px">0.00000</div><div class="t r" style="left:1398px">1.12940</div><div class="t r" style="left:1542px">0.00</div><div class="t r" style="left:1686px">33.39</div><div class="t r" style="left:1889px">-866.80</div>
</div>
<div class="row b" style="top:774px">
<div class="t" style="left:40px;transform:scaleX(.93)">Баланс: 100 004.64 USD</div><div class="t" style="left:181px;transform:scaleX(.93)">Средства: 97 432.55</div><div class="t" style="left:300px;transform:scaleX(.93)">Маржа: 131.31</div><div class="t" style="left:390px;transform:scaleX(.93)">Свободная маржа: 97 301.24</div><div class="t" style="left:560px;transform:scaleX(.93)">Уровень: 74202.55%</div><div class="t r" style="left:1889px;transform:scaleX(.97)">-2 572.09</div>
</div>

<!-- bottom tabs -->
<div class="a" style="left:18px;top:868px;width:72px;height:21px;background:#fff;border:1px solid #222;border-top:0;border-bottom:2px solid #333"></div>
<div class="t c" style="left:30px;top:871px">Торговля</div>
<div class="t g c" style="left:100px;top:871px">Активы</div>
<div class="t g c" style="left:162px;top:871px">История Счета</div>
<div class="t g c" style="left:263px;top:871px">Новости</div><div class="red" style="left:312px">80</div>
<div class="t g c" style="left:342px;top:871px">Алерты</div>
<div class="t g c" style="left:405px;top:871px">Почта</div><div class="red" style="left:440px">6</div>
<div class="t g c" style="left:465px;top:871px">Маркет</div><div class="red" style="left:509px">107</div>
<div class="t g c" style="left:543px;top:871px">Статьи</div>
<div class="t g c" style="left:600px;top:871px">Библиотека</div>
<div class="t g c" style="left:685px;top:871px">Эксперты</div>
<div class="t g c" style="left:758px;top:871px">Журнал</div>
<div class="a" style="left:151px;top:872px;width:1px;height:13px;background:#999"></div><div class="a" style="left:253px;top:872px;width:1px;height:13px;background:#999"></div><div class="a" style="left:332px;top:872px;width:1px;height:13px;background:#999"></div><div class="a" style="left:394px;top:872px;width:1px;height:13px;background:#999"></div><div class="a" style="left:455px;top:872px;width:1px;height:13px;background:#999"></div><div class="a" style="left:533px;top:872px;width:1px;height:13px;background:#999"></div><div class="a" style="left:590px;top:872px;width:1px;height:13px;background:#999"></div><div class="a" style="left:675px;top:872px;width:1px;height:13px;background:#999"></div><div class="a" style="left:748px;top:872px;width:1px;height:13px;background:#999"></div><div class="a" style="left:812px;top:872px;width:1px;height:13px;background:#999"></div>

<!-- status bar -->
<div class="t" style="left:3px;top:900px;transform:scaleX(.93)">Для вызова справки нажмите F1</div>
<div class="t" style="left:1211px;top:900px">Default</div>
<div class="a" style="left:1771px;top:901px;width:27px;height:12px;background:repeating-linear-gradient(90deg,#2a7a3a 0 1px,#b0bcb0 1px 2px)"></div>
<div class="t" style="left:1800px;top:900px">2255/10 kb</div>
</body></html>
